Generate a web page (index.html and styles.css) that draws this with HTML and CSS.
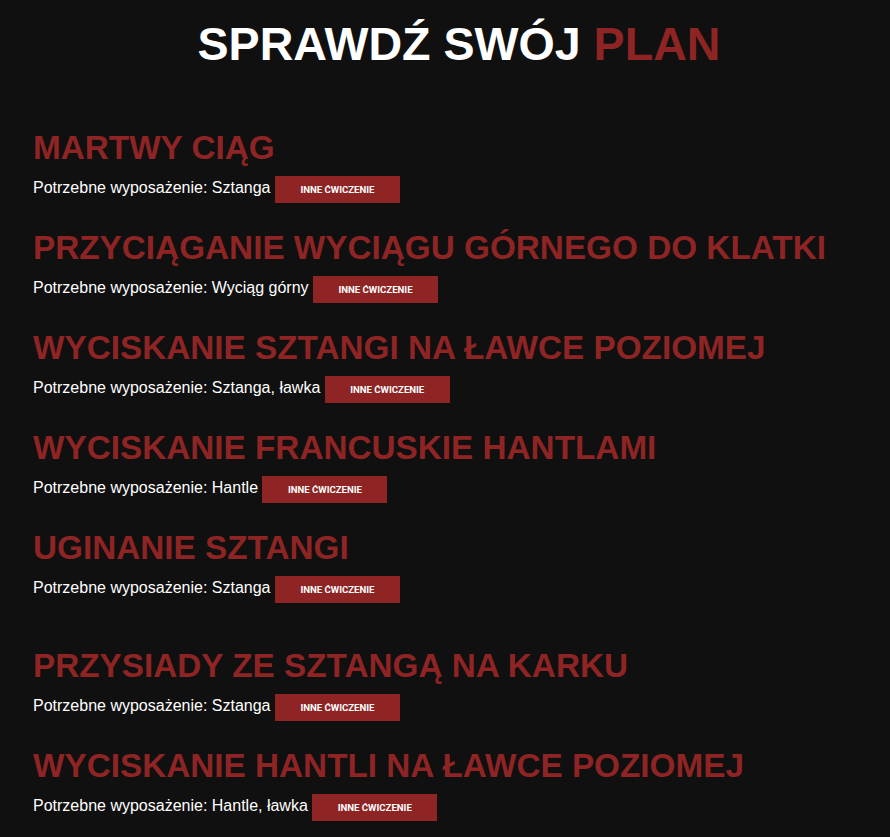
FILE: index.html
```html
<!DOCTYPE html>
<html lang="pl">
<head>
<meta charset="utf-8">
<title>Sprawdź swój plan</title>
<link rel="stylesheet" href="styles.css">
</head>
<body>
<main class="page">
  <h1 class="title">SPRAWDŹ SWÓJ <span class="accent">PLAN</span></h1>
  <section class="exercise">
    <h2 class="exercise-name">MARTWY CIĄG</h2>
    <p class="equipment">Potrzebne wyposażenie: Sztanga <button class="swap">INNE ĆWICZENIE</button></p>
  </section>
  <section class="exercise">
    <h2 class="exercise-name">PRZYCIĄGANIE WYCIĄGU GÓRNEGO DO KLATKI</h2>
    <p class="equipment">Potrzebne wyposażenie: Wyciąg górny <button class="swap">INNE ĆWICZENIE</button></p>
  </section>
  <section class="exercise">
    <h2 class="exercise-name">WYCISKANIE SZTANGI NA ŁAWCE POZIOMEJ</h2>
    <p class="equipment">Potrzebne wyposażenie: Sztanga, ławka <button class="swap">INNE ĆWICZENIE</button></p>
  </section>
  <section class="exercise">
    <h2 class="exercise-name">WYCISKANIE FRANCUSKIE HANTLAMI</h2>
    <p class="equipment">Potrzebne wyposażenie: Hantle <button class="swap">INNE ĆWICZENIE</button></p>
  </section>
  <section class="exercise">
    <h2 class="exercise-name">UGINANIE SZTANGI</h2>
    <p class="equipment">Potrzebne wyposażenie: Sztanga <button class="swap">INNE ĆWICZENIE</button></p>
  </section>
  <section class="exercise exercise-break">
    <h2 class="exercise-name">PRZYSIADY ZE SZTANGĄ NA KARKU</h2>
    <p class="equipment">Potrzebne wyposażenie: Sztanga <button class="swap">INNE ĆWICZENIE</button></p>
  </section>
  <section class="exercise">
    <h2 class="exercise-name">WYCISKANIE HANTLI NA ŁAWCE POZIOMEJ</h2>
    <p class="equipment">Potrzebne wyposażenie: Hantle, ławka <button class="swap">INNE ĆWICZENIE</button></p>
  </section>
</main>
</body>
</html>
```

FILE: styles.css
```css
html, body {
  margin: 0;
  padding: 0;
  background: #101010;
}

body {
  font-family: "Liberation Sans", Arial, sans-serif;
  color: #ffffff;
}

.page {
  padding: 17px 5px 40px 33px;
}

.title {
  margin: 0 0 58px;
  font-size: 46.6px;
  line-height: 54px;
  font-weight: 700;
  text-align: center;
  color: #ffffff;
}

.accent {
  color: #8e2424;
}

.exercise {
  margin: 0 0 26px;
}

.exercise-break {
  margin-top: 44px;
}

.exercise-name {
  margin: 0 0 10px;
  font-size: 33.3px;
  line-height: 37px;
  font-weight: 700;
  color: #8e2424;
}

.equipment {
  margin: 0;
  font-size: 16px;
  color: #ffffff;
}

.swap {
  display: inline-block;
  width: 125px;
  height: 27px;
  padding: 0;
  margin: 0;
  border: 0;
  background: #8e2424;
  color: #ffffff;
  font-family: Roboto, "Liberation Sans", Arial, sans-serif;
  font-size: 9.6px;
  font-weight: 700;
  line-height: 27px;
  text-align: center;
  vertical-align: baseline;
}
```
